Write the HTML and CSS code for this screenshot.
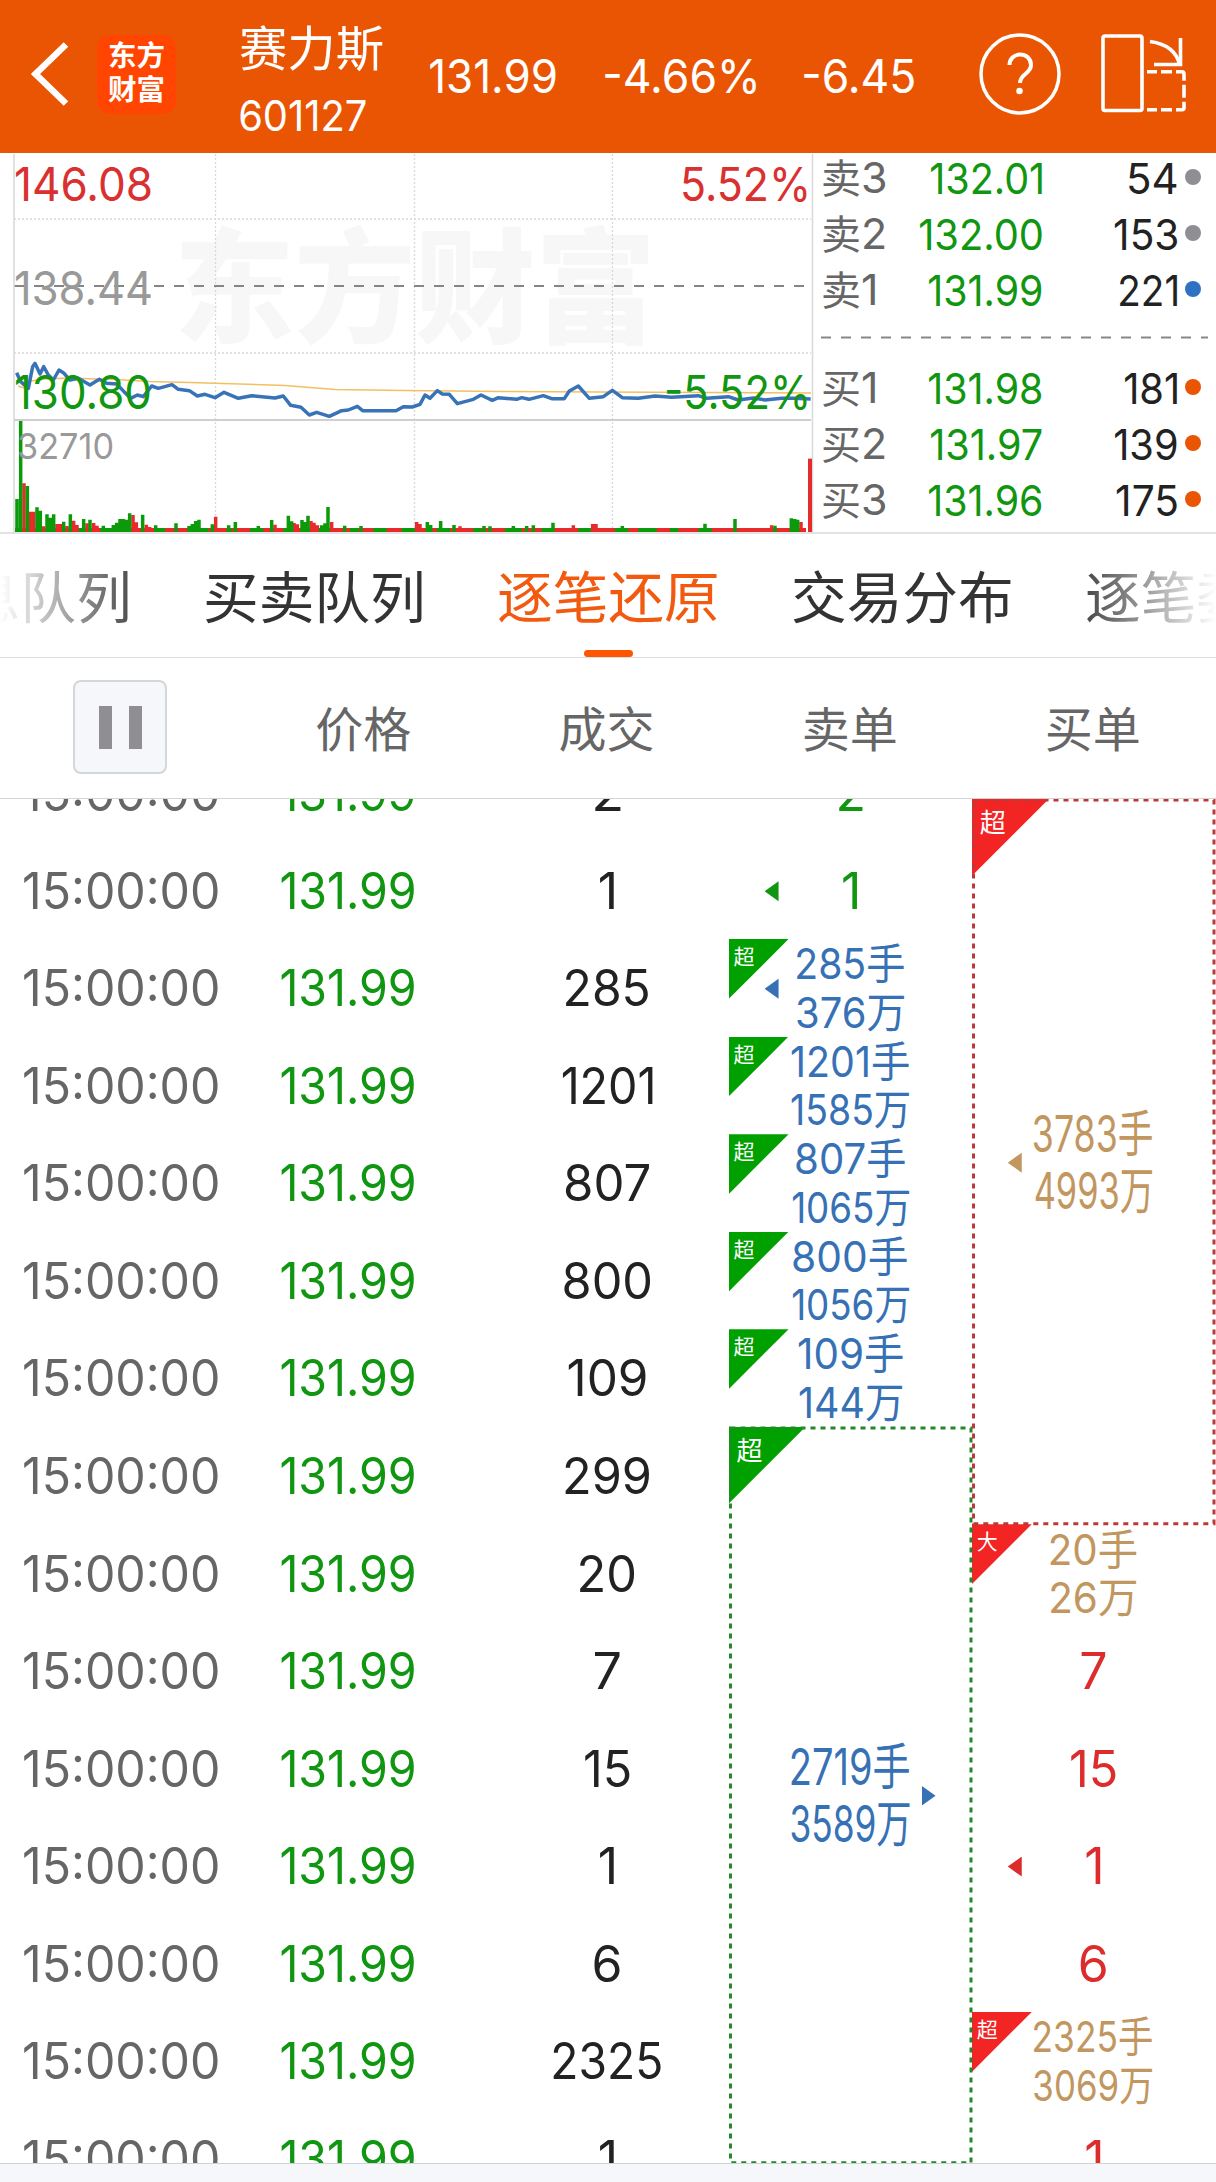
FILE: index.html
```html
<!DOCTYPE html>
<html lang="zh-CN">
<head>
<meta charset="utf-8">
<title>赛力斯 601127</title>
<link rel="stylesheet" href="styles.css">
</head>
<body>
<header class="topbar">
  <svg class="back" width="97" height="153" viewBox="0 0 97 153"><path d="M66 44.500L35.500 74L66 103.500" fill="none" stroke="#fff" stroke-width="6.500"/></svg>
  <div class="logo"><span>东方</span><span>财富</span></div>
  <div class="stock">
    <div class="stock-name"><span class="fit left" data-w="143">赛力斯</span></div>
    <div class="stock-code"><span class="fit left" data-w="126">601127</span></div>
  </div>
  <div class="quote"><span class="fit left" data-w="126">131.99</span></div>
  <div class="quote"><span class="fit left" data-w="151">-4.66%</span></div>
  <div class="quote"><span class="fit left" data-w="110">-6.45</span></div>
  <svg class="help" width="82" height="153" viewBox="979 0 82 153" fill="none" stroke="#fff"><circle cx="1020" cy="74" r="39" stroke-width="3.500"/><path d="M1009.500 65c0-6 4.500-10.500 10.500-10.500s11 4 11 10.500c0 9-11 8.500-11 18" stroke-width="4"/><circle cx="1019.500" cy="91" r="3.300" fill="#fff" stroke="none"/></svg>
  <svg class="rotate" width="90" height="153" viewBox="1100 0 90 153" fill="none" stroke="#fff" stroke-width="3.600"><rect x="1103" y="36" width="39" height="74.500" rx="2"/><path d="M1150 41.500C1168 44 1177 52 1179.500 65"/><path d="M1180.500 38V64.500H1154"/><path d="M1147 71.700h10m4 0h11m4 0h6q2 0 2 2v7m0 4v13m0 4v6q0 2-2 2h-6m-4 0h-11m-4 0h-10"/></svg>
</header>

<section class="market">
  <svg class="chart" width="814" height="380" viewBox="0 153 814 380">
    <text class="watermark" x="174" y="333" textLength="482" lengthAdjust="spacingAndGlyphs">东方财富</text>
    <g class="grid">
      <path d="M215.500 154V533M414.500 154V533M612.500 154V533M14 219H811M14 353H811"/>
    </g>
    <path class="middle" d="M14 286H806"/>
    <path class="frame" d="M14 154V533M812.500 154V533"/>
    <path class="frame strong" d="M14 420H811"/>
    <path class="average" d="M18 386L24 388L31 381L45 379L70 378L95 379L115 379.500L150 381.500L190 382.500L240 384L285 385.500L310 387.500L335 389.500L405 390.500L500 391.500L600 392L811 393"/>
    <path class="price" transform="translate(0 150) scale(.33333)" d="M50 668L62 695L85 715L98 650L105 640L120 672L131 650L145 675L160 690L177 660L190 668L210 690L235 685L270 705L298 688L320 700L350 702L372 725L392 745L412 735L430 740L455 708L475 715L516 704L535 718L568 722L592 738L615 733L645 743L672 727L715 745L755 737L825 744L850 738L872 766L903 772L928 795L950 787L988 799L1025 782L1045 780L1072 769L1088 782L1188 782L1210 770L1237 771L1260 763L1275 735L1290 745L1312 722L1327 732L1348 733L1372 761L1420 748L1443 735L1477 751L1495 743L1550 748L1565 743L1587 748L1630 737L1655 746L1693 746L1708 723L1735 708L1768 745L1810 740L1837 721L1867 743L1915 745L1965 738L2015 742L2095 737L2120 745L2185 740L2215 750L2260 744L2295 750L2345 745L2380 745L2432 747"/>
    <g transform="translate(0 150) scale(.33333)">
      <path class="vol-up flat" d="M46 1140H2418"/>
      <path class="vol-down flat" d="M46 1140h20m70 0h30m20 0h10m40 0h10m55 0h35m15 0h58m54 0h32m70 0h60m55 0h15m55 0h40m60 0h15m50 0h60m75 0h25m45 0h40m45 0h45m60 0h40m70 0h25m70 0h50m60 0h30m80 0h45m65 0h40m30 0h55m40 0h25m60 0h40"/>
      <path class="vol-up" d="M72 1146V1000M92 1146V1085M101 1146V1085M131 1146V1129M171 1146V1122M181 1146V1122M201 1146V1128M221 1146V1112M231 1146V1125M261 1146V1120M281 1146V1119M291 1146V1127M399 1146V1095M409 1146V1117M439 1146V1124M449 1146V1131M647 1146V1100M825 1146V1124M882 1146V1119M892 1146V1123M933 1146V1113M942 1146V1118M952 1146V1126M995 1146V1116M1250 1146V1116M1260 1146V1122M1380 1146V1129M1720 1146V1126M1778 1146V1122M1788 1146V1122M2315 1146V1126M2403 1146V1116"/>
      <path class="vol-down" d="M51 1146V1047M62 1146V813M82 1146V1008M111 1146V1072M121 1146V1082M141 1146V1093M151 1146V1103M161 1146V1093M191 1146V1115M211 1146V1093M251 1146V1107M270 1146V1109M310 1146V1127M340 1146V1125M350 1146V1118M360 1146V1107M370 1146V1107M380 1146V1109M389 1146V1090M428 1146V1094M467 1146V1126M528 1146V1120M567 1146V1128M577 1146V1122M587 1146V1113M597 1146V1109M637 1146V1123M686 1146V1126M706 1146V1116M775 1146V1128M815 1146V1110M865 1146V1097M875 1146V1114M906 1146V1110M916 1146V1116M924 1146V1097M965 1146V1126M975 1146V1120M984 1146V1071M1034 1146V1127M1083 1146V1128M1282 1146V1116M1292 1146V1125M1322 1146V1113M1362 1146V1125M1452 1146V1128M1470 1146V1129M1540 1146V1128M1580 1146V1128M1600 1146V1126M1659 1146V1118M1867 1146V1128M2115 1146V1121M2205 1146V1107M2325 1146V1127M2374 1146V1105M2384 1146V1107M2393 1146V1109"/>
      <path class="vol-up last" d="M2430 1146V926"/>
    </g>
    <text class="label up" x="14" y="201" textLength="139" lengthAdjust="spacingAndGlyphs">146.08</text>
    <text class="label flat-price" x="14" y="305" textLength="139" lengthAdjust="spacingAndGlyphs">138.44</text>
    <text class="label down" x="14" y="409" textLength="138" lengthAdjust="spacingAndGlyphs">130.80</text>
    <text class="label up" x="680" y="201" textLength="131" lengthAdjust="spacingAndGlyphs">5.52%</text>
    <text class="label down" x="664" y="409" textLength="147" lengthAdjust="spacingAndGlyphs">-5.52%</text>
    <text class="label small" x="17" y="459" textLength="97" lengthAdjust="spacingAndGlyphs">32710</text>
  </svg>
  <div class="book">
    <div class="level"><span class="side"><b>卖</b>3</span><span class="bid"><span class="fit right" data-w="111">132.01</span></span><span class="amount"><span class="fit right" data-w="48">54</span></span><i class="dot grey"></i></div>
    <div class="level"><span class="side"><b>卖</b>2</span><span class="bid"><span class="fit right" data-w="122">132.00</span></span><span class="amount"><span class="fit right" data-w="62">153</span></span><i class="dot grey"></i></div>
    <div class="level"><span class="side"><b>卖</b>1</span><span class="bid"><span class="fit right" data-w="113">131.99</span></span><span class="amount"><span class="fit right" data-w="57">221</span></span><i class="dot blue"></i></div>
    <svg class="divider" width="390" height="42" viewBox="0 0 390 42"><path d="M0 18.500H387" stroke="#888" stroke-width="2" stroke-dasharray="10 10"/></svg>
    <div class="level"><span class="side"><b>买</b>1</span><span class="bid"><span class="fit right" data-w="113">131.98</span></span><span class="amount"><span class="fit right" data-w="52">181</span></span><i class="dot orange"></i></div>
    <div class="level"><span class="side"><b>买</b>2</span><span class="bid"><span class="fit right" data-w="111">131.97</span></span><span class="amount"><span class="fit right" data-w="62">139</span></span><i class="dot orange"></i></div>
    <div class="level"><span class="side"><b>买</b>3</span><span class="bid"><span class="fit right" data-w="113">131.96</span></span><span class="amount"><span class="fit right" data-w="60">175</span></span><i class="dot orange"></i></div>
  </div>
</section>

<nav class="tabs">
  <a>信息队列</a><a>买卖队列</a><a class="active">逐笔还原</a><a>交易分布</a><a>逐笔委托</a>
</nav>

<div class="columns">
  <div><button class="pause" aria-label="暂停"><i></i><i></i></button></div>
  <div>价格</div><div>成交</div><div>卖单</div><div>买单</div>
</div>

<main class="trades"><div class="trade-grid" id="grid"></div></main>
<footer class="footer"></footer>
<script src="script.js"></script>
</body>
</html>
```
FILE: styles.css
```css
* { box-sizing: border-box; }

body {
  margin: 0;
  width: 1216px;
  height: 2182px;
  overflow: hidden;
  display: flex;
  flex-direction: column;
  background: #fff;
  font-family: Inter, "Noto Sans CJK SC", sans-serif;
  color: #222;
}

svg { display: block; }
.fit { display: inline-block; white-space: pre; transform-origin: 0 50%; }

.topbar {
  flex: none;
  height: 153px;
  display: grid;
  grid-template-columns: 97px 143px 190px 175px 199px 175px 121px 116px;
  align-items: center;
  background: #ea5504;
  color: #fff;
}
.logo {
  width: 79px;
  height: 79px;
  margin-top: -5px;
  border-radius: 14px;
  background: #ff4500;
  display: flex;
  flex-direction: column;
  align-items: center;
  justify-content: center;
  padding-bottom: 2px;
  font-size: 28.500px;
  font-weight: 700;
  line-height: 34px;
}
.stock { height: 153px; padding-top: 18px; white-space: nowrap; }
.stock-name { font-size: 48px; line-height: 62px; }
.stock-code { font-size: 43px; line-height: 60px; padding-top: 5px; }
.quote { font-size: 47px; line-height: 60px; white-space: nowrap; padding-bottom: 2px; }

.market { flex: none; height: 381px; display: flex; border-bottom: 2px solid #e3e3e3; }
.chart { flex: none; }
.grid path { stroke: #d8d8d8; stroke-width: 1.300; stroke-dasharray: 2 2; }
.middle { stroke: #858585; stroke-width: 2; stroke-dasharray: 10 10; }
.frame { stroke: #d8d8d8; stroke-width: 1.500; fill: none; }
.strong { stroke: #cfcfcf; stroke-width: 2; }
.average { fill: none; stroke: #f3c060; stroke-width: 1.600; }
.price { fill: none; stroke: #3873b8; stroke-width: 10.500; stroke-linejoin: round; }
.vol-up { stroke: #e72b2b; stroke-width: 10.500; fill: none; }
.vol-down { stroke: #0a9a0a; stroke-width: 10.500; fill: none; }
.flat { stroke-width: 12; }
.last { stroke-width: 12; }
.watermark { font-size: 124px; font-weight: 900; fill: #f7f7f7; }
.label { font-size: 47px; }
.small { font-size: 36px; fill: #999; }
.up { fill: #d93030; }
.down { fill: #109610; }
.flat-price { fill: #999; }

.book { flex: 1; padding: 0 0 0 7px; font-size: 43px; }
.level { height: 56px; display: grid; grid-template-columns: 99px 122px 135px 1fr; align-items: center; line-height: 56px; position: relative; top: -4px; }
.side { color: #666; white-space: nowrap; }
.side b { font-weight: 400; font-size: 40px; }
.bid, .amount { display: flex; justify-content: flex-end; color: #109610; }
.amount { color: #222; }
.dot { width: 16px; height: 16px; border-radius: 50%; margin: -3px 0 0 8px; }
.grey { background: #8e8e93; }
.blue { background: #2f72c4; }
.orange { background: #ea5504; }
.divider { position: relative; top: -2px; }

.tabs {
  flex: none;
  height: 123px;
  margin: 0;
  display: flex;
  gap: 71px;
  padding-left: 203px;
  font-size: 55.700px;
  line-height: 127px;
  white-space: nowrap;
  overflow: hidden;
  color: #333;
  -webkit-mask-image: linear-gradient(90deg, transparent 0, #000 150px, #000 1070px, transparent 1216px);
  mask-image: linear-gradient(90deg, transparent 0, #000 150px, #000 1070px, transparent 1216px);
}
.tabs a { flex: none; width: 223px; }
.tabs a:first-child { margin-left: -294px; }
.active { color: #f25a10; position: relative; }
.active::after {
  content: "";
  position: absolute;
  left: 50%;
  top: 116px;
  width: 49px;
  height: 7px;
  margin-left: -24.500px;
  border-radius: 4px;
  background: #ff5500;
}

.columns {
  flex: none;
  height: 142px;
  display: grid;
  grid-template-columns: repeat(5, 243.200px);
  border-top: 1px solid #dedede;
  border-bottom: 1px solid #d4d4d4;
  font-size: 48px;
  line-height: 144px;
  text-align: center;
  color: #666;
}
.columns > div { position: relative; left: -1.500px; }
.pause {
  width: 94px;
  height: 94px;
  margin: 22px auto 0;
  padding: 0;
  display: flex;
  align-items: center;
  justify-content: center;
  gap: 17px;
  border: 2.500px solid #d3d6db;
  border-radius: 8px;
  background: #f5f7fa;
}
.pause i { width: 13px; height: 43px; background: #8e8e93; }

.trades { flex: none; height: 1364px; overflow: hidden; }
.trade-grid {
  margin: -55px 0 0 -1px;
  display: grid;
  grid-template-columns: repeat(5, 243.200px);
  grid-template-rows: repeat(15, 97.540px);
}
.cell {
  position: relative;
  display: flex;
  flex-direction: column;
  align-items: center;
  justify-content: center;
  padding-top: 2px;
  font-size: 50px;
  line-height: 57px;
  white-space: nowrap;
}
.time { color: #666; }
.trade-price { color: #109610; padding-right: 31px; }
.sell { color: #109610; }
.buy { color: #dd2c2c; }
.pair { font-size: 42.500px; line-height: 48.500px; }
.sell.big { color: #3771b5; }
.buy.big { color: #c2965f; }
.sell-box { grid-column: 4; grid-row: 8 / 16; margin: 0 0 44px; }
.buy-box { grid-column: 5; grid-row: 1 / 9; margin: 55px 0 0; }
.outline { position: absolute; inset: 0; width: 100%; height: 100%; overflow: visible; }
.outline rect { fill: none; stroke-width: 3; stroke-dasharray: 5 5; }
.sell-box .outline rect { stroke: #22882a; }
.buy-box .outline rect { stroke: #bd3838; }

.corner {
  position: absolute;
  left: 0;
  top: 0;
  width: 60px;
  height: 60px;
  clip-path: polygon(0 0, 100% 0, 0 100%);
  color: #fff;
  font-size: 21px;
  line-height: 36px;
  padding-left: 5px;
}
.sell .corner { background: #00a000; }
.buy .corner { background: #f22424; }
.sell-box .corner, .buy-box .corner { width: 77px; height: 77px; font-size: 26px; line-height: 47px; padding-left: 8px; }

.arrow { position: absolute; top: 50%; left: 36px; width: 14px; height: 20px; margin-top: -9px; background: currentColor; clip-path: polygon(0 50%, 100% 0, 100% 100%); }
.arrow.to-right { left: 193px; clip-path: polygon(0 0, 100% 50%, 0 100%); }

.footer { flex: 1; border-top: 1px solid #d0d3d6; background: #f5f7fa; }
```
FILE: script.js
```js
// [volume, volume width, sell cell, buy cell]
const trades = [
  ['2', 26, { text: '2' }],
  ['1', 0, { text: '1', arrow: true }],
  ['285', 83, { big: ['285手', 107, '376万', 107], arrow: true }],
  ['1201', 90, { big: ['1201手', 118, '1585万', 118] }],
  ['807', 84, { big: ['807手', 109, '1065万', 117] }],
  ['800', 87, { big: ['800手', 114, '1056万', 117] }],
  ['109', 78, { big: ['109手', 105, '144万', 103] }],
  ['299', 85, null],
  ['20', 55, null, { tag: '大', big: ['20手', 86, '26万', 85] }],
  ['7', 25, null, { text: '7' }],
  ['15', 45, null, { text: '15', width: 45 }],
  ['1', 0, null, { text: '1', arrow: true }],
  ['6', 27, null, { text: '6' }],
  ['2325', 108, null, { big: ['2325手', 118, '3069万', 118] }],
  ['1', 0, null, { text: '1' }],
];

const fit = (text, width) => `<span class="fit" data-w="${width || ''}">${text}</span>`;

function order(side, column, row, o) {
  if (!o) return '';
  const style = `style="grid-area:${row}/${column}"`;
  const arrow = o.arrow ? '<i class="arrow"></i>' : '';
  if (!o.big) return `<div class="cell ${side}" ${style}>${arrow}${fit(o.text, o.width)}</div>`;
  const [a, aw, b, bw] = o.big;
  return `<div class="cell pair big ${side}" ${style}><span class="corner">${o.tag || '超'}</span>${arrow}${fit(a, aw)}${fit(b, bw)}</div>`;
}

const outline = '<svg class="outline"><rect x="1.5" y="1" width="240.5" height="99.8%"/></svg>';
let html = '';
trades.forEach(([volume, width, sell, buy], i) => {
  const row = i + 1;
  html += `<div class="cell time" style="grid-area:${row}/1">${fit('15:00:00', 194)}</div>`
    + `<div class="cell trade-price" style="grid-area:${row}/2">${fit('131.99', 133.5)}</div>`
    + `<div class="cell" style="grid-area:${row}/3">${fit(volume, width)}</div>`
    + order('sell', 4, row, sell) + order('buy', 5, row, buy);
});
html += `<div class="cell big sell sell-box"><span class="corner">超</span>${outline}${fit('2719手', 118)}${fit('3589万', 118)}<i class="arrow to-right"></i></div>`;
html += `<div class="cell big buy buy-box"><span class="corner">超</span>${outline}${fit('3783手', 118)}${fit('4993万', 117)}<i class="arrow"></i></div>`;
document.getElementById('grid').innerHTML = html;

// Condense or widen each label so that its visible glyphs span data-w pixels.
const ctx = document.createElement('canvas').getContext('2d');
document.querySelectorAll('.fit').forEach((el) => {
  const css = getComputedStyle(el);
  ctx.font = `${css.fontWeight} ${css.fontSize} ${css.fontFamily}`;
  const m = ctx.measureText(el.textContent);
  const left = -m.actualBoundingBoxLeft;
  const ink = m.actualBoundingBoxRight - left;
  const scale = (Number(el.dataset.w) || ink) / ink;
  const box = el.offsetWidth;
  let shift = box / 2 - scale * (left + ink / 2);
  if (el.classList.contains('left')) shift = -scale * left;
  if (el.classList.contains('right')) shift = box - scale * (left + ink);
  el.style.transform = `translateX(${shift}px) scaleX(${scale})`;
});
```
